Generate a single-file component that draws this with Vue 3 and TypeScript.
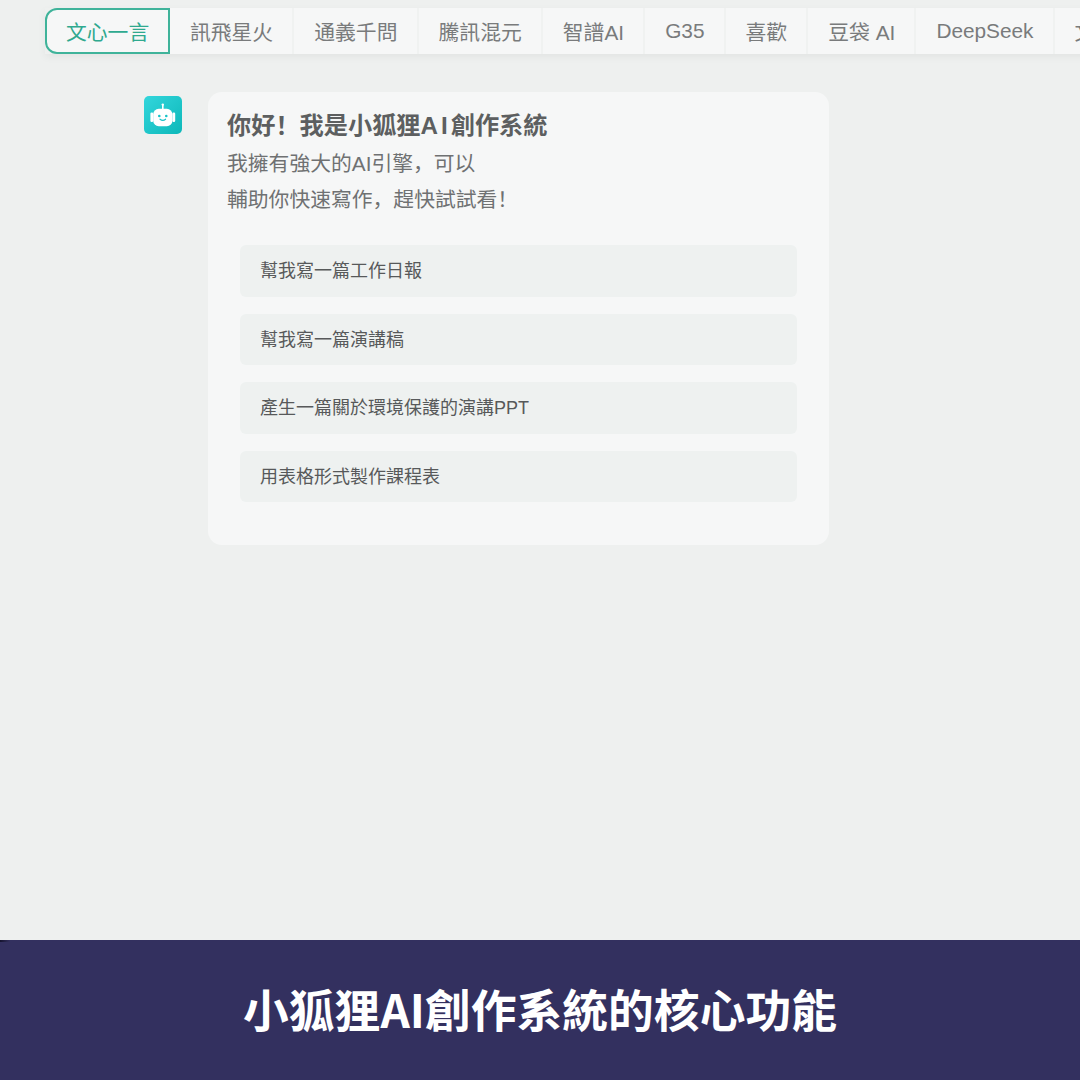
<script setup lang="ts">
const tabs = ['訊飛星火', '通義千問', '騰訊混元', '智譜AI', 'G35', '喜歡', '豆袋 AI', 'DeepSeek', '文心一言']
const prompts = ['幫我寫一篇工作日報', '幫我寫一篇演講稿', '產生一篇關於環境保護的演講PPT', '用表格形式製作課程表']
</script>

<template>
  <div class="page">
    <main class="main">
      <nav class="tabs">
        <button class="tab active" type="button">文心一言</button>
        <button v-for="t in tabs" :key="t" class="tab" type="button">{{ t }}</button>
      </nav>

      <section class="chat">
        <div class="avatar">
          <svg width="26" height="26" viewBox="0 0 26 26" fill="#fff">
            <rect x="12" y="2.5" width="1.6" height="5" />
            <circle cx="12.8" cy="2.6" r="1.2" />
            <rect x="3.2" y="6.8" width="19.2" height="17.4" rx="5.5" />
            <rect x="0.4" y="10.5" width="2.8" height="9.5" rx="1.2" />
            <rect x="22.4" y="10.5" width="2.8" height="9.5" rx="1.2" />
            <circle cx="9.3" cy="14" r="1.3" fill="#16c3c8" />
            <circle cx="16.3" cy="14" r="1.3" fill="#16c3c8" />
            <path d="M10 17.2c1.6 1.3 4 1.3 5.6 0" fill="none" stroke="#16c3c8" stroke-width="1.1" stroke-linecap="round" />
          </svg>
        </div>
        <div class="card">
          <h1 class="title">你好！我是小狐狸<span class="latin">AI</span>創作系統</h1>
          <p class="intro">我擁有強大的AI引擎，可以</p>
          <p class="intro">輔助你快速寫作，趕快試試看！</p>
          <ul class="prompts">
            <li v-for="p in prompts" :key="p" class="prompt">{{ p }}</li>
          </ul>
        </div>
      </section>
    </main>

    <footer class="banner">小狐狸AI創作系統的核心功能</footer>
  </div>
</template>

<style>
html,
body {
  margin: 0;
  background: #eef0ef;
}
</style>

<style scoped>
.page {
  width: 1080px;
  height: 1080px;
  display: flex;
  flex-direction: column;
  overflow: hidden;
  background: #eef0ef;
  font-family: "Liberation Sans", "Noto Sans CJK SC", sans-serif;
}

.main {
  flex: 1;
  padding: 8px 0 0 45px;
  min-height: 0;
}

.tabs {
  display: flex;
  height: 46px;
  width: 1100px;
  box-shadow: 0 3px 8px rgba(0, 0, 0, 0.05);
}

.tab {
  flex: none;
  height: 46px;
  padding: 0 19.1px 0 20px;
  border: 0;
  border-right: 2px solid #f0f2f1;
  background: #f6f7f7;
  color: #797b7c;
  font: inherit;
  font-size: 20.8px;
  white-space: nowrap;
}

.tab.active {
  border: 2px solid #3fb39a;
  border-radius: 12px 0 0 12px;
  padding: 0 18.8px 0 19px;
  color: #2fa98f;
}

.chat {
  display: flex;
  align-items: flex-start;
  gap: 26px;
  margin: 38px 0 0 99px;
}

.avatar {
  width: 38px;
  height: 38px;
  margin-top: 4px;
  border-radius: 5px;
  display: flex;
  align-items: center;
  justify-content: center;
  background: linear-gradient(135deg, #33d6dc, #0db8b9);
}

.card {
  width: 621px;
  height: 453px;
  box-sizing: border-box;
  padding: 17px 32px 0 19px;
  border-radius: 14px;
  background: #f6f7f7;
  color: #6f7172;
}

.title {
  margin: 0 0 3px;
  font-size: 24.2px;
  line-height: 34px;
  font-weight: 700;
  color: #5d5f60;
}

.latin {
  letter-spacing: 3px;
}

.intro {
  margin: 0;
  font-size: 20.8px;
  line-height: 36px;
}

.prompts {
  list-style: none;
  margin: 27px 0 0 13px;
  padding: 0;
  display: flex;
  flex-direction: column;
  gap: 17px;
}

.prompt {
  height: 51.5px;
  line-height: 53px;
  padding-left: 20px;
  border-radius: 6px;
  background: #eef1f0;
  color: #57595a;
  font-size: 18px;
}

.banner {
  flex: none;
  height: 140px;
  box-sizing: border-box;
  padding-bottom: 5px;
  display: flex;
  align-items: center;
  justify-content: center;
  background:
    linear-gradient(to right, #15132e, rgba(21, 19, 46, 0)) 0 0 / 10px 2px no-repeat,
    #33305f;
  color: #fff;
  font-family: "Noto Sans CJK TC", sans-serif;
  font-size: 45.8px;
  font-weight: 700;
}
</style>
